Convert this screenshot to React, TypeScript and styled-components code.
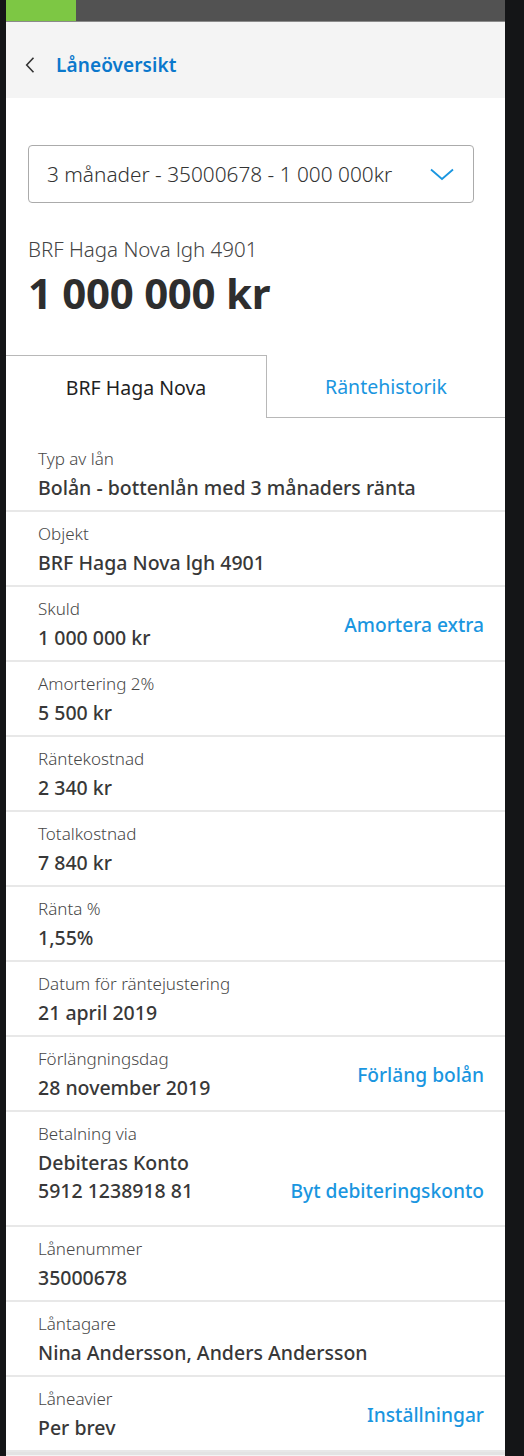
import React from "react";
import styled, { createGlobalStyle } from "styled-components";

const GlobalStyle = createGlobalStyle`
  * {
    box-sizing: border-box;
  }
  html, body {
    margin: 0;
    padding: 0;
    background: #141517;
  }
  body {
    font-family: "Noto Sans", "Liberation Sans", sans-serif;
    color: #333;
  }
`;

const Phone = styled.div`
  margin-left: 6px;
  width: 499px;
  min-height: 1456px;
  background: #f4f4f4;
  display: flex;
  flex-direction: column;
`;

const StatusBar = styled.div`
  height: 22px;
  display: flex;
  background: #525252;
  border-bottom: 1px solid #8a8a8a;
`;

const Progress = styled.div`
  width: 70px;
  background: #7dc744;
`;

const Header = styled.div`
  height: 76px;
  display: flex;
  align-items: center;
  gap: 21px;
  padding: 9px 0 0 19px;
  background: #f4f4f4;
`;

const BackButton = styled.button`
  border: 0;
  background: none;
  padding: 0;
  display: flex;
  align-items: center;
  cursor: pointer;
`;

const HeaderTitle = styled.h1`
  margin: 0;
  font-size: 19px;
  font-weight: 600;
  color: #0b78cc;
  letter-spacing: 0.1px;
`;

const Main = styled.main`
  background: #fff;
`;

const Intro = styled.section`
  padding: 47px 31px 0 22px;
`;

const Select = styled.button`
  width: 100%;
  height: 58px;
  display: flex;
  align-items: center;
  justify-content: space-between;
  padding: 0 19px 0 18px;
  background: #fff;
  border: 1px solid #ababab;
  border-radius: 4px;
  font-family: inherit;
  font-size: 20.8px;
  font-weight: 300;
  color: #333;
  cursor: pointer;
`;

const ObjectName = styled.div`
  margin-top: 33px;
  font-size: 20.5px;
  line-height: 26px;
  font-weight: 300;
  color: #444;
`;

const Amount = styled.div`
  margin-top: 7px;
  font-size: 42px;
  line-height: 48px;
  font-weight: 700;
  color: #2e2e2e;
  letter-spacing: -0.3px;
`;

const Tabs = styled.div`
  margin-top: 38px;
  display: grid;
  grid-template-columns: 261px 1fr;
  height: 63px;
`;

const Tab = styled.button<{ $active?: boolean }>`
  border: 0;
  font-family: inherit;
  font-size: 19.5px;
  background: #fff;
  cursor: pointer;
  padding: 0;
  color: ${(p) => (p.$active ? "#1f1f1f" : "#1a96e0")};
  border-top: ${(p) => (p.$active ? "1.5px solid #b8b8b8" : "0")};
  border-right: ${(p) => (p.$active ? "1.5px solid #b8b8b8" : "0")};
  border-bottom: ${(p) => (p.$active ? "0" : "1.5px solid #b8b8b8")};
`;

const List = styled.div`
  display: flex;
  flex-direction: column;
`;

const Row = styled.div<{ $first?: boolean; $bottom?: boolean }>`
  display: flex;
  justify-content: space-between;
  align-items: ${(p) => (p.$bottom ? "flex-end" : "center")};
  padding: ${(p) => (p.$first ? "29px" : "10px")} 21px ${(p) => (p.$bottom ? "20px" : "8px")} 32px;
  border-bottom: 2px solid #e8e8e8;
`;

const Info = styled.div`
  display: flex;
  flex-direction: column;
`;

const Label = styled.span`
  font-size: 17px;
  font-weight: 300;
  color: #474747;
  line-height: 24px;
  margin-bottom: 3px;
`;

const Value = styled.span`
  font-size: 19.5px;
  font-weight: 500;
  color: #383838;
  line-height: 28px;
`;

const Action = styled.a`
  font-size: 19.2px;
  font-weight: 500;
  color: #1a96e0;
  text-decoration: none;
  cursor: pointer;
  line-height: 28px;
`;

const Footer = styled.div`
  border-top: 3px solid #e3e3e3;
  flex: 1;
  background: #f4f4f4;
`;

const BackIcon = () => (
  <svg width="10" height="18" viewBox="0 0 10 18" fill="none">
    <path d="M8.5 1.8 1.7 9l6.8 7.2" stroke="#333" strokeWidth="1.6" />
  </svg>
);

const DownIcon = () => (
  <svg width="24" height="24" viewBox="0 0 24 24" fill="none">
    <path d="M1 7.5 12 17 23 7.5" stroke="#1a96e0" strokeWidth="1.8" />
  </svg>
);

type Detail = {
  label: string;
  values: string[];
  action?: string;
};

const details: Detail[] = [
  { label: "Typ av lån", values: ["Bolån - bottenlån med 3 månaders ränta"] },
  { label: "Objekt", values: ["BRF Haga Nova lgh 4901"] },
  { label: "Skuld", values: ["1 000 000 kr"], action: "Amortera extra" },
  { label: "Amortering 2%", values: ["5 500 kr"] },
  { label: "Räntekostnad", values: ["2 340 kr"] },
  { label: "Totalkostnad", values: ["7 840 kr"] },
  { label: "Ränta %", values: ["1,55%"] },
  { label: "Datum för räntejustering", values: ["21 april 2019"] },
  { label: "Förlängningsdag", values: ["28 november 2019"], action: "Förläng bolån" },
  {
    label: "Betalning via",
    values: ["Debiteras Konto", "5912 1238918 81"],
    action: "Byt debiteringskonto",
  },
  { label: "Lånenummer", values: ["35000678"] },
  { label: "Låntagare", values: ["Nina Andersson, Anders Andersson"] },
  { label: "Låneavier", values: ["Per brev"], action: "Inställningar" },
];

export default function App() {
  return (
    <>
      <GlobalStyle />
      <Phone>
        <StatusBar>
          <Progress />
        </StatusBar>
        <Header>
          <BackButton aria-label="Tillbaka">
            <BackIcon />
          </BackButton>
          <HeaderTitle>Låneöversikt</HeaderTitle>
        </Header>
        <Main>
          <Intro>
            <Select>
              <span>3 månader - 35000678 - 1 000 000kr</span>
              <DownIcon />
            </Select>
            <ObjectName>BRF Haga Nova lgh 4901</ObjectName>
            <Amount>1 000 000 kr</Amount>
          </Intro>
          <Tabs>
            <Tab $active>BRF Haga Nova</Tab>
            <Tab>Räntehistorik</Tab>
          </Tabs>
          <List>
            {details.map((d, i) => (
              <Row key={d.label} $first={i === 0} $bottom={d.values.length > 1}>
                <Info>
                  <Label>{d.label}</Label>
                  {d.values.map((v) => (
                    <Value key={v}>{v}</Value>
                  ))}
                </Info>
                {d.action && <Action>{d.action}</Action>}
              </Row>
            ))}
          </List>
        </Main>
        <Footer />
      </Phone>
    </>
  );
}
